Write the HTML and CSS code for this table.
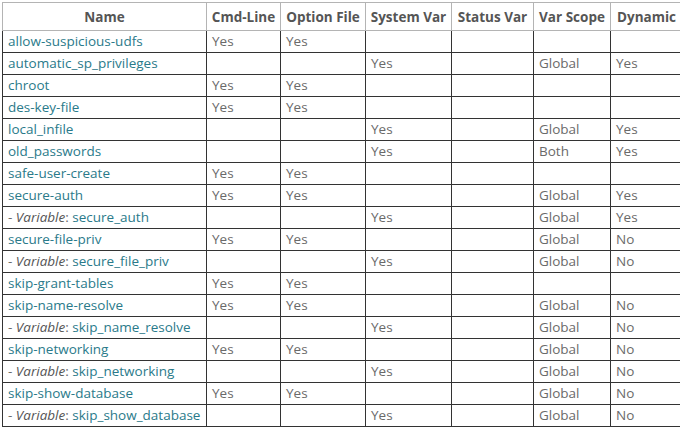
FILE: index.html
```html
<!DOCTYPE html>
<html>
<head>
<meta charset="utf-8">
<link rel="stylesheet" href="styles.css">
</head>
<body>
<div class="wrap">
<table class="opts">
<colgroup>
<col class="c-name"><col class="c-cmd"><col class="c-opt"><col class="c-sys"><col class="c-stat"><col class="c-scope"><col class="c-dyn">
</colgroup>
<thead>
<tr><th>Name</th><th>Cmd-Line</th><th>Option File</th><th>System Var</th><th>Status Var</th><th>Var Scope</th><th>Dynamic</th></tr>
</thead>
<tbody>
<tr><td><a>allow-suspicious-udfs</a></td><td>Yes</td><td>Yes</td><td></td><td></td><td></td><td></td></tr>
<tr><td><a>automatic_sp_privileges</a></td><td></td><td></td><td>Yes</td><td></td><td>Global</td><td>Yes</td></tr>
<tr><td><a>chroot</a></td><td>Yes</td><td>Yes</td><td></td><td></td><td></td><td></td></tr>
<tr><td><a>des-key-file</a></td><td>Yes</td><td>Yes</td><td></td><td></td><td></td><td></td></tr>
<tr><td><a>local_infile</a></td><td></td><td></td><td>Yes</td><td></td><td>Global</td><td>Yes</td></tr>
<tr><td><a>old_passwords</a></td><td></td><td></td><td>Yes</td><td></td><td>Both</td><td>Yes</td></tr>
<tr><td><a>safe-user-create</a></td><td>Yes</td><td>Yes</td><td></td><td></td><td></td><td></td></tr>
<tr><td><a>secure-auth</a></td><td>Yes</td><td>Yes</td><td></td><td></td><td>Global</td><td>Yes</td></tr>
<tr><td>- <em>Variable</em>: <a>secure_auth</a></td><td></td><td></td><td>Yes</td><td></td><td>Global</td><td>Yes</td></tr>
<tr><td><a>secure-file-priv</a></td><td>Yes</td><td>Yes</td><td></td><td></td><td>Global</td><td>No</td></tr>
<tr><td>- <em>Variable</em>: <a>secure_file_priv</a></td><td></td><td></td><td>Yes</td><td></td><td>Global</td><td>No</td></tr>
<tr><td><a>skip-grant-tables</a></td><td>Yes</td><td>Yes</td><td></td><td></td><td></td><td></td></tr>
<tr><td><a>skip-name-resolve</a></td><td>Yes</td><td>Yes</td><td></td><td></td><td>Global</td><td>No</td></tr>
<tr><td>- <em>Variable</em>: <a>skip_name_resolve</a></td><td></td><td></td><td>Yes</td><td></td><td>Global</td><td>No</td></tr>
<tr><td><a>skip-networking</a></td><td>Yes</td><td>Yes</td><td></td><td></td><td>Global</td><td>No</td></tr>
<tr><td>- <em>Variable</em>: <a>skip_networking</a></td><td></td><td></td><td>Yes</td><td></td><td>Global</td><td>No</td></tr>
<tr><td><a>skip-show-database</a></td><td>Yes</td><td>Yes</td><td></td><td></td><td>Global</td><td>No</td></tr>
<tr><td>- <em>Variable</em>: <a>skip_show_database</a></td><td></td><td></td><td>Yes</td><td></td><td>Global</td><td>No</td></tr>
</tbody>
</table>
</div>
</body>
</html>
```
FILE: styles.css
```css
html, body {
  margin: 0;
  padding: 0;
  background: #fff;
  overflow: hidden;
}
.wrap {
  padding: 2px 0 0 2px;
  width: 678px;
  overflow: hidden;
}
.opts {
  border-collapse: collapse;
  table-layout: fixed;
  width: 680px;
  font-family: "Open Sans", "Liberation Sans", sans-serif;
  font-size: 13.5px;
  color: #6a6a6a;
}
.c-name { width: 204px; }
.c-cmd { width: 74px; }
.c-opt { width: 85px; }
.c-sys { width: 86px; }
.c-stat { width: 82px; }
.c-scope { width: 77px; }
.c-dyn { width: 72px; }
.opts th {
  height: 28px;
  padding: 0 2px;
  border: 1px solid #b4b4b4;
  color: #555;
  font-weight: 700;
  text-align: center;
  white-space: nowrap;
  box-sizing: border-box;
}
.opts td {
  height: 22px;
  padding: 0 5px 1px;
  border: 1px solid #333;
  white-space: nowrap;
  line-height: 19px;
  box-sizing: border-box;
}
.opts a {
  color: #2a7a8a;
}
.opts em {
  color: #555;
  font-style: italic;
}
```
